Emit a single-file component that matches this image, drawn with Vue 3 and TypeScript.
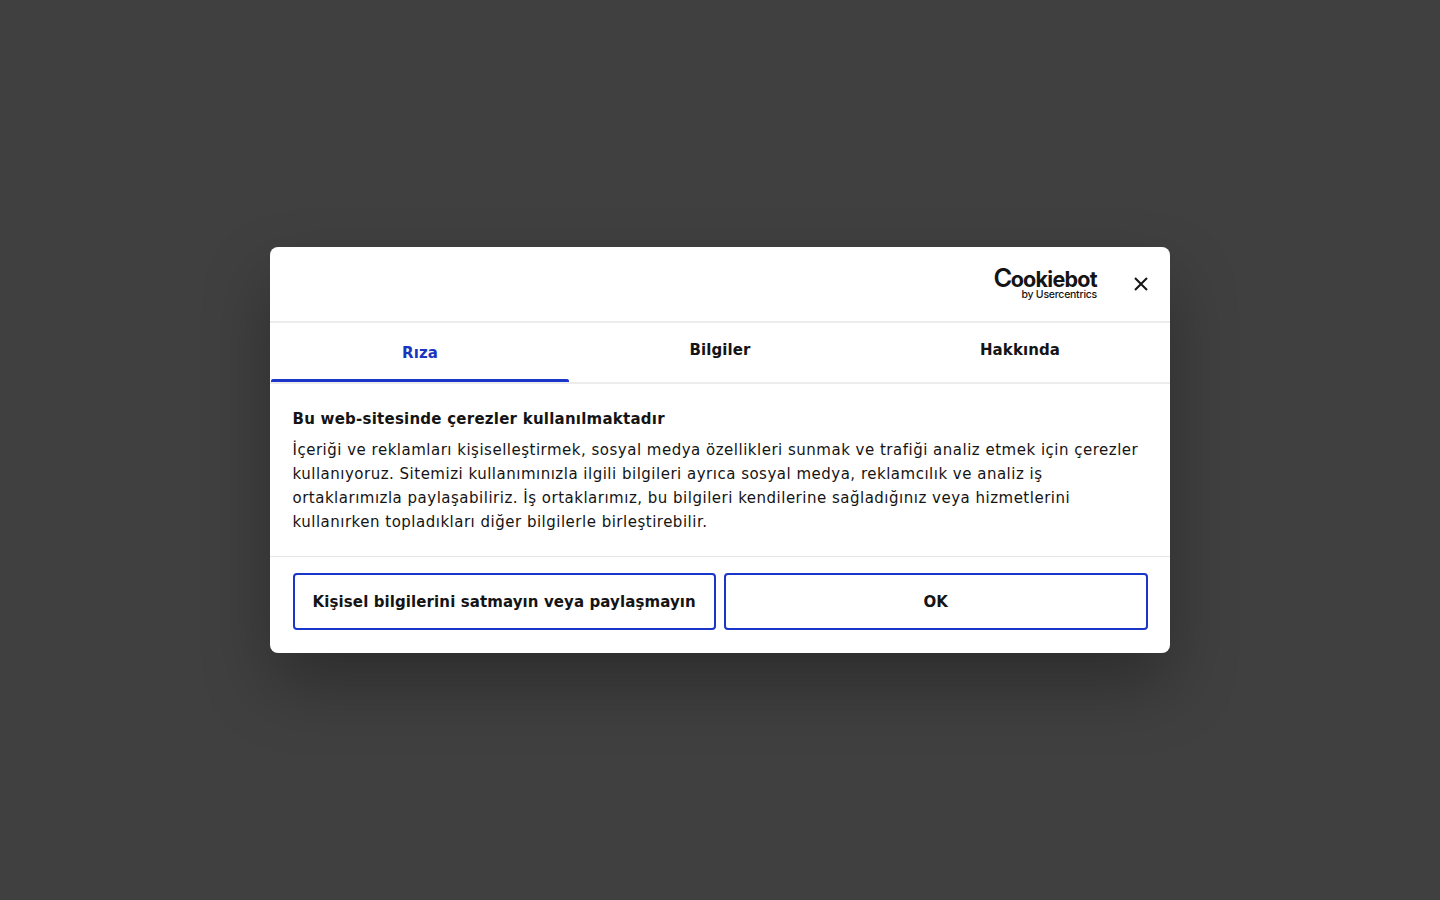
<script setup lang="ts">
const tabs: string[] = ['Rıza', 'Bilgiler', 'Hakkında']
</script>

<template>
  <div class="page">
    <div class="dialog">
      <header class="head">
        <div class="logo">
          <span class="logo-main"><span class="logo-c">C</span>ookiebot</span>
          <span class="logo-sub">by Usercentrics</span>
        </div>
        <button class="close" aria-label="Close">
          <svg width="14" height="14" viewBox="0 0 14 14"><path d="M1 1L13 13M13 1L1 13" stroke="#141414" stroke-width="2" fill="none"/></svg>
        </button>
      </header>
      <nav class="tabs">
        <div v-for="(t, i) in tabs" :key="t" class="tab" :class="{ active: i === 0 }">{{ t }}</div>
      </nav>
      <section class="body">
        <h2 class="title">Bu web-sitesinde çerezler kullanılmaktadır</h2>
        <p class="text">İçeriği ve reklamları kişiselleştirmek, sosyal medya özellikleri sunmak ve trafiği analiz etmek için çerezler kullanıyoruz. Sitemizi kullanımınızla ilgili bilgileri ayrıca sosyal medya, reklamcılık ve analiz iş ortaklarımızla paylaşabiliriz. İş ortaklarımız, bu bilgileri kendilerine sağladığınız veya hizmetlerini kullanırken topladıkları diğer bilgilerle birleştirebilir.</p>
      </section>
      <footer class="foot">
        <button class="btn">Kişisel bilgilerini satmayın veya paylaşmayın</button>
        <button class="btn">OK</button>
      </footer>
    </div>
  </div>
</template>

<style>
html, body { margin: 0; background: #404040; }
</style>

<style scoped>
.page {
  height: 900px;
  display: flex;
  align-items: center;
  justify-content: center;
  background: #404040;
  font-family: "DejaVu Sans", sans-serif;
  color: #141414;
}
.dialog {
  width: 900px;
  height: 406.5px;
  background: #fff;
  border-radius: 8px;
  box-shadow: 0 32px 68px rgba(0, 0, 0, 0.3);
  display: flex;
  flex-direction: column;
  overflow: hidden;
  box-sizing: border-box;
}
.head {
  height: 76px;
  box-sizing: border-box;
  border-bottom: 2px solid #ececec;
  display: flex;
  align-items: center;
  justify-content: flex-end;
  padding: 0 22px 0 0;
  flex: none;
}
.logo {
  display: flex;
  flex-direction: column;
  align-items: flex-end;
  margin-right: 37px;
  margin-top: 1px;
  color: #141414;
}
.logo-main {
  font-family: "Inter", sans-serif;
  font-weight: 700;
  font-size: 21.5px;
  letter-spacing: -0.72px;
  line-height: 20px;
}
.logo-c {
  font-size: 25.5px;
  font-weight: 600;
  letter-spacing: -1.6px;
}
.logo-sub {
  font-family: "Inter", sans-serif;
  font-weight: 500;
  font-size: 10.5px;
  letter-spacing: -0.25px;
  line-height: 11px;
}
.close {
  border: 0;
  background: none;
  padding: 0;
  width: 14px;
  height: 14px;
  display: flex;
}
.tabs {
  display: flex;
  height: 61px;
  flex: none;
  box-sizing: border-box;
  border-bottom: 2px solid #ececec;
}
.tab {
  flex: 1;
  text-align: center;
  font-weight: 700;
  font-size: 15px;
  letter-spacing: 0.1px;
  line-height: 18px;
  padding-top: 18px;
  position: relative;
}
.tab.active {
  color: #1a35bf;
  padding-top: 21px;
}
.tab.active::after {
  content: "";
  position: absolute;
  left: 1px;
  right: 1px;
  bottom: 0;
  height: 3px;
  border-radius: 2px 2px 0 0;
  background: #1a35c9;
}
.body {
  flex: 1;
  padding: 25px 22.5px 0;
  border-bottom: 1px solid #e6e6e6;
}
.title {
  margin: 0 0 9px;
  font-size: 15px;
  font-weight: 700;
  letter-spacing: 0.24px;
  line-height: 20px;
}
.text {
  margin: 0;
  font-size: 15px;
  letter-spacing: 0.5px;
  line-height: 24px;
}
.foot {
  flex: none;
  display: flex;
  gap: 8px;
  padding: 16px 22.5px 23px;
}
.btn {
  flex: 1;
  height: 57.5px;
  box-sizing: border-box;
  background: #fff;
  border: 2px solid #1a35c9;
  border-radius: 4px;
  font-family: inherit;
  font-size: 15px;
  font-weight: 700;
  letter-spacing: 0.1px;
  color: #141414;
  padding: 0;
}
</style>
